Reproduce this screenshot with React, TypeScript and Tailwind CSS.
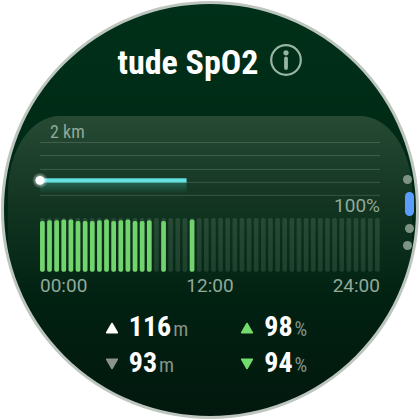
import { useState } from "react";

const SLOTS = 48;
const PITCH = 7.15;
const BAR_WIDTH = 4.7;

// Half-hour slots with a SpO2 reading: slot -> percentage
const readings: Record<number, number> = {
  0: 96, 1: 97, 2: 97, 3: 98, 4: 98, 5: 96, 6: 96, 7: 96,
  8: 97, 9: 98, 10: 96, 11: 97, 12: 98, 13: 96, 14: 96, 15: 97,
  17: 96, 21: 98,
};

const gridLines = [2, 15, 29, 42, 55];

const pages = ["Overview", "Altitude SpO2", "Trends", "Settings"];

interface StatProps {
  label: string;
  direction: "up" | "down";
  color: string;
  value: number;
  unit: string;
}

function Stat({ label, direction, color, value, unit }: StatProps) {
  return (
    <div className="flex h-9 items-center gap-2.5" aria-label={label}>
      <svg viewBox="0 0 14 12" className={`h-3 w-3.5 ${color}`} aria-hidden="true">
        <path
          d={direction === "up" ? "M7 1.5 12.3 10.7H1.7Z" : "M7 10.5 12.3 1.3H1.7Z"}
          fill="currentColor"
          stroke="currentColor"
          strokeWidth="1.6"
          strokeLinejoin="round"
        />
      </svg>
      <p className="flex items-baseline">
        <span className="text-[28px] leading-9 font-bold text-white">{value}</span>
        <span className="pl-0.5 text-xl leading-9 text-[#84958a]">{unit}</span>
      </p>
    </div>
  );
}

function AltitudeChart() {
  return (
    <svg viewBox="0 0 349 58" className="-ml-2 block w-[calc(100%+8px)]" role="img" aria-label="Altitude">
      <defs>
        <linearGradient id="altitude-fill" x1="0" y1="0" x2="0" y2="1">
          <stop offset="0" stopColor="#3fb8a8" stopOpacity="0.35" />
          <stop offset="1" stopColor="#3fb8a8" stopOpacity="0" />
        </linearGradient>
        <radialGradient id="dot-glow">
          <stop offset="0.4" stopColor="#fff" stopOpacity="0.6" />
          <stop offset="1" stopColor="#fff" stopOpacity="0" />
        </radialGradient>
      </defs>
      {gridLines.map((y) => (
        <path key={y} d={`M8 ${y + 0.5}H349`} stroke="#fff" strokeOpacity="0.16" />
      ))}
      <rect x="8" y="42" width="147" height="12" fill="url(#altitude-fill)" />
      <rect x="8" y="38.4" width="147" height="4.2" fill="#66e2e2" />
      <circle cx="8" cy="40.5" r="8" fill="url(#dot-glow)" />
      <circle cx="8" cy="40.5" r="4.5" fill="#fff" />
    </svg>
  );
}

function OxygenChart() {
  return (
    <svg viewBox="0 0 341 54" className="block w-full" role="img" aria-label="Blood oxygen">
      {Array.from({ length: SLOTS }, (_, i) => {
        const x = i * PITCH;
        const reading = readings[i];
        const top = reading ? 1.5 + (98 - reading) * 0.7 : 0;
        return (
          <g key={i}>
            <rect x={x} y="0" width={BAR_WIDTH} height="54" rx="1.8" fill="#8fb59d" fillOpacity="0.18" />
            {reading && (
              <rect x={x} y={top} width={BAR_WIDTH} height={54 - top} rx="1.8" fill="#72d46d" />
            )}
          </g>
        );
      })}
    </svg>
  );
}

function PageDots() {
  const [active, setActive] = useState(1);
  const offsets = ["mr-0.5", "mr-0", "mr-0", "mr-0.5"];

  return (
    <nav className="absolute top-[171px] right-0.5 flex flex-col items-end gap-2" aria-label="Pages">
      {pages.map((page, i) => (
        <button
          key={page}
          aria-label={page}
          onClick={() => setActive(i)}
          className={`rounded-full ${offsets[i]} ${i === active ? "h-6 w-[9px] bg-[#5c9cfb]" : "size-[9px] bg-[#7d9485]"}`}
        />
      ))}
    </nav>
  );
}

export default function App() {
  return (
    <main className="flex min-h-screen items-center justify-center bg-white p-px font-['Roboto_Condensed','Roboto',sans-serif]">
      <div className="relative aspect-square w-full max-w-[min(100vw,100vh)] overflow-hidden rounded-full border-[3px] border-[#bcc5be] bg-linear-to-b from-[#003019] via-[#002814] via-50% to-[#02180e]">
        {/* Title */}
        <header className="flex items-center justify-center gap-3 pt-8">
          <h1 className="text-[34px] leading-13 font-bold whitespace-nowrap text-white">tude SpO2</h1>
          <button aria-label="About altitude SpO2" className="pb-1 text-[#98b5a1]">
            <svg viewBox="0 0 32 32" className="size-8" fill="none" aria-hidden="true">
              <circle cx="16" cy="16" r="14.8" stroke="currentColor" strokeWidth="2.2" />
              <circle cx="16" cy="8.8" r="2.6" fill="currentColor" />
              <path d="M16 14.5V24" stroke="currentColor" strokeWidth="3.8" strokeLinecap="round" />
            </svg>
          </button>
        </header>

        {/* Chart card */}
        <section className="mx-1 mt-7 rounded-t-[52px_76px] bg-linear-to-b from-[#264a34] via-[#173725c8] via-50% to-[#031b1000] px-8 pt-2 text-[19px] leading-5 text-[#91a999]">
          <p className="px-2.5 text-lg leading-4">2 km</p>
          <AltitudeChart />
          <div className="font-[Roboto,sans-serif]">
            <p className="pb-1 text-right leading-4">100%</p>
            <OxygenChart />
            <div className="flex justify-between pt-1">
              <span>00:00</span>
              <span>12:00</span>
              <span>24:00</span>
            </div>
          </div>
        </section>

        {/* Highs and lows */}
        <section className="grid grid-cols-[auto_auto] justify-center gap-x-13 pt-3.5 pr-2">
          <Stat label="Highest altitude" direction="up" color="text-white" value={116} unit="m" />
          <Stat label="Highest SpO2" direction="up" color="text-[#72dc6c]" value={98} unit="%" />
          <Stat label="Lowest altitude" direction="down" color="text-[#8c928e]" value={93} unit="m" />
          <Stat label="Lowest SpO2" direction="down" color="text-[#72dc6c]" value={94} unit="%" />
        </section>

        <PageDots />
      </div>
    </main>
  );
}
